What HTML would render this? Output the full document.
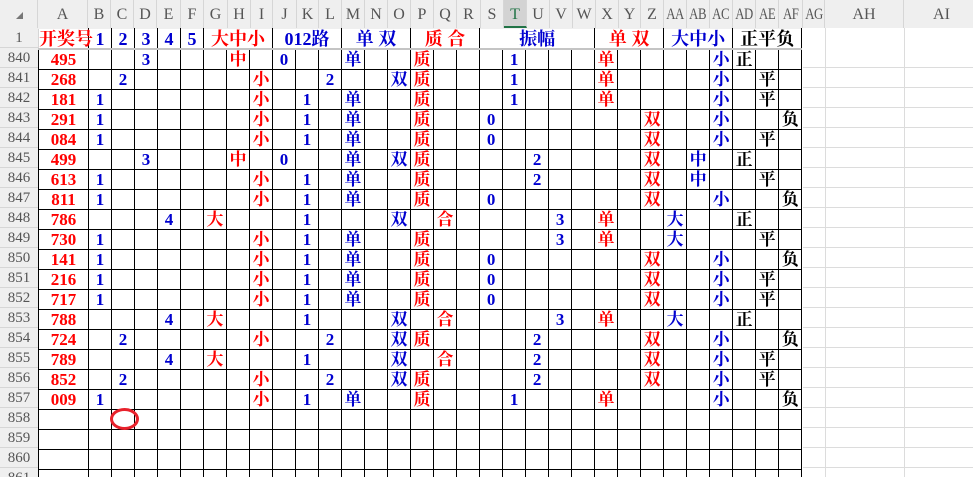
<!DOCTYPE html>
<html><head><meta charset="utf-8"><style>
html,body{margin:0;padding:0;width:973px;height:477px;overflow:hidden;background:#fff;position:relative;}
.hd{position:absolute;top:0;height:28px;background:#efefef;border-right:1px solid #d6d6d6;box-sizing:border-box;font:16px "Liberation Serif","Noto Serif CJK SC",serif;color:#555;text-align:center;line-height:30px;white-space:nowrap;}
.hd span.n{display:inline-block;transform:scaleX(0.8);letter-spacing:-0.5px;}
.rh{position:absolute;left:0;width:38px;height:20px;background:#efefef;border-bottom:1px solid #d6d6d6;box-sizing:border-box;font:15px "Liberation Serif",serif;color:#555;text-align:center;line-height:20px;}
table{position:absolute;left:38px;top:28px;border-collapse:collapse;table-layout:fixed;width:764px;}
td{border:1px solid #000;height:19px;padding:0;text-align:center;font:bold 17px "Liberation Serif","Noto Serif CJK SC",serif;line-height:18px;overflow:visible;white-space:nowrap;}
tr.h td{border-top:1px solid #efefef;border-bottom:2px solid #c4c4c4;font-size:18px;}
tr.h td.f{border-left:1px solid #d6d6d6;}
.r{color:#f00}.b{color:#0000d0}.k{color:#000}
.a{color:#f00}
#grid{position:absolute;left:803px;top:48px;width:170px;height:429px;
background-image:repeating-linear-gradient(to bottom,transparent 0,transparent 19px,#dcdcdc 19px,#dcdcdc 20px);}
.vl{position:absolute;top:28px;width:1px;height:449px;background:#dcdcdc;}
#ell{position:absolute;left:110px;top:408px;width:23px;height:16px;border:3px solid #e8212b;border-radius:50%;}
</style></head><body>
<div class="hd" style="left:0;width:38px;"><span style="position:absolute;left:16px;top:12px;width:0;height:0;border-left:7px solid transparent;border-bottom:7px solid #777;"></span></div>
<div class="hd" style="left:38px;width:50px">A</div>
<div class="hd" style="left:88px;width:23px">B</div>
<div class="hd" style="left:111px;width:23px">C</div>
<div class="hd" style="left:134px;width:23px">D</div>
<div class="hd" style="left:157px;width:24px">E</div>
<div class="hd" style="left:181px;width:23px">F</div>
<div class="hd" style="left:204px;width:24px">G</div>
<div class="hd" style="left:228px;width:23px">H</div>
<div class="hd" style="left:251px;width:22px">I</div>
<div class="hd" style="left:273px;width:24px">J</div>
<div class="hd" style="left:297px;width:22px">K</div>
<div class="hd" style="left:319px;width:23px">L</div>
<div class="hd" style="left:342px;width:23px">M</div>
<div class="hd" style="left:365px;width:23px">N</div>
<div class="hd" style="left:388px;width:23px">O</div>
<div class="hd" style="left:411px;width:23px">P</div>
<div class="hd" style="left:434px;width:23px">Q</div>
<div class="hd" style="left:457px;width:24px">R</div>
<div class="hd" style="left:481px;width:23px">S</div>
<div class="hd" style="left:504px;width:23px;background:#d3d3d3;color:#217346;border-bottom:2px solid #217346">T</div>
<div class="hd" style="left:527px;width:23px">U</div>
<div class="hd" style="left:550px;width:23px">V</div>
<div class="hd" style="left:573px;width:23px">W</div>
<div class="hd" style="left:596px;width:23px">X</div>
<div class="hd" style="left:619px;width:22px">Y</div>
<div class="hd" style="left:641px;width:23px">Z</div>
<div class="hd" style="left:664px;width:23px"><span class="n">AA</span></div>
<div class="hd" style="left:687px;width:23px"><span class="n">AB</span></div>
<div class="hd" style="left:710px;width:23px"><span class="n">AC</span></div>
<div class="hd" style="left:733px;width:23px"><span class="n">AD</span></div>
<div class="hd" style="left:756px;width:23px"><span class="n">AE</span></div>
<div class="hd" style="left:779px;width:24px"><span class="n">AF</span></div>
<div class="hd" style="left:803px;width:22px"><span class="n">AG</span></div>
<div class="hd" style="left:825px;width:79px">AH</div>
<div class="hd" style="left:904px;width:76px">AI</div>

<div class="rh" style="top:28px">1</div>
<div class="rh" style="top:48px">840</div>
<div class="rh" style="top:68px">841</div>
<div class="rh" style="top:88px">842</div>
<div class="rh" style="top:108px">843</div>
<div class="rh" style="top:128px">844</div>
<div class="rh" style="top:148px">845</div>
<div class="rh" style="top:168px">846</div>
<div class="rh" style="top:188px">847</div>
<div class="rh" style="top:208px">848</div>
<div class="rh" style="top:228px">849</div>
<div class="rh" style="top:248px">850</div>
<div class="rh" style="top:268px">851</div>
<div class="rh" style="top:288px">852</div>
<div class="rh" style="top:308px">853</div>
<div class="rh" style="top:328px">854</div>
<div class="rh" style="top:348px">855</div>
<div class="rh" style="top:368px">856</div>
<div class="rh" style="top:388px">857</div>
<div class="rh" style="top:408px">858</div>
<div class="rh" style="top:428px">859</div>
<div class="rh" style="top:448px">860</div>
<div class="rh" style="top:468px">861</div>

<div id="grid"></div>
<div class="vl" style="left:825px"></div>
<div class="vl" style="left:904px"></div>

<table>
<colgroup><col style="width:50px"><col span="31" style="width:23px"></colgroup>
<tr class="h"><td class="r f">开奖号<td class=b>1<td class=b>2<td class=b>3<td class=b>4<td class=b>5<td colspan=3 class=r>大中小<td colspan=3 class=b>012路<td colspan=3 class=b>单 双<td colspan=3 class=r>质 合<td colspan=5 class=b>振幅<td colspan=3 class=r>单 双<td colspan=3 class=b>大中小<td colspan=3 class=k>正平负</tr>
<tr><td class=a>495<td><td><td class=b>3<td><td><td><td class=r>中<td><td class=b>0<td><td><td class=b>单<td><td><td class=r>质<td><td><td><td class=b>1<td><td><td><td class=r>单<td><td><td><td><td class=b>小<td class=k>正<td><td></tr>
<tr><td class=a>268<td><td class=b>2<td><td><td><td><td><td class=r>小<td><td><td class=b>2<td><td><td class=b>双<td class=r>质<td><td><td><td class=b>1<td><td><td><td class=r>单<td><td><td><td><td class=b>小<td><td class=k>平<td></tr>
<tr><td class=a>181<td class=b>1<td><td><td><td><td><td><td class=r>小<td><td class=b>1<td><td class=b>单<td><td><td class=r>质<td><td><td><td class=b>1<td><td><td><td class=r>单<td><td><td><td><td class=b>小<td><td class=k>平<td></tr>
<tr><td class=a>291<td class=b>1<td><td><td><td><td><td><td class=r>小<td><td class=b>1<td><td class=b>单<td><td><td class=r>质<td><td><td class=b>0<td><td><td><td><td><td><td class=r>双<td><td><td class=b>小<td><td><td class=k>负</tr>
<tr><td class=a>084<td class=b>1<td><td><td><td><td><td><td class=r>小<td><td class=b>1<td><td class=b>单<td><td><td class=r>质<td><td><td class=b>0<td><td><td><td><td><td><td class=r>双<td><td><td class=b>小<td><td class=k>平<td></tr>
<tr><td class=a>499<td><td><td class=b>3<td><td><td><td class=r>中<td><td class=b>0<td><td><td class=b>单<td><td class=b>双<td class=r>质<td><td><td><td><td class=b>2<td><td><td><td><td class=r>双<td><td class=b>中<td><td class=k>正<td><td></tr>
<tr><td class=a>613<td class=b>1<td><td><td><td><td><td><td class=r>小<td><td class=b>1<td><td class=b>单<td><td><td class=r>质<td><td><td><td><td class=b>2<td><td><td><td><td class=r>双<td><td class=b>中<td><td><td class=k>平<td></tr>
<tr><td class=a>811<td class=b>1<td><td><td><td><td><td><td class=r>小<td><td class=b>1<td><td class=b>单<td><td><td class=r>质<td><td><td class=b>0<td><td><td><td><td><td><td class=r>双<td><td><td class=b>小<td><td><td class=k>负</tr>
<tr><td class=a>786<td><td><td><td class=b>4<td><td class=r>大<td><td><td><td class=b>1<td><td><td><td class=b>双<td><td class=r>合<td><td><td><td><td class=b>3<td><td class=r>单<td><td><td class=b>大<td><td><td class=k>正<td><td></tr>
<tr><td class=a>730<td class=b>1<td><td><td><td><td><td><td class=r>小<td><td class=b>1<td><td class=b>单<td><td><td class=r>质<td><td><td><td><td><td class=b>3<td><td class=r>单<td><td><td class=b>大<td><td><td><td class=k>平<td></tr>
<tr><td class=a>141<td class=b>1<td><td><td><td><td><td><td class=r>小<td><td class=b>1<td><td class=b>单<td><td><td class=r>质<td><td><td class=b>0<td><td><td><td><td><td><td class=r>双<td><td><td class=b>小<td><td><td class=k>负</tr>
<tr><td class=a>216<td class=b>1<td><td><td><td><td><td><td class=r>小<td><td class=b>1<td><td class=b>单<td><td><td class=r>质<td><td><td class=b>0<td><td><td><td><td><td><td class=r>双<td><td><td class=b>小<td><td class=k>平<td></tr>
<tr><td class=a>717<td class=b>1<td><td><td><td><td><td><td class=r>小<td><td class=b>1<td><td class=b>单<td><td><td class=r>质<td><td><td class=b>0<td><td><td><td><td><td><td class=r>双<td><td><td class=b>小<td><td class=k>平<td></tr>
<tr><td class=a>788<td><td><td><td class=b>4<td><td class=r>大<td><td><td><td class=b>1<td><td><td><td class=b>双<td><td class=r>合<td><td><td><td><td class=b>3<td><td class=r>单<td><td><td class=b>大<td><td><td class=k>正<td><td></tr>
<tr><td class=a>724<td><td class=b>2<td><td><td><td><td><td class=r>小<td><td><td class=b>2<td><td><td class=b>双<td class=r>质<td><td><td><td><td class=b>2<td><td><td><td><td class=r>双<td><td><td class=b>小<td><td><td class=k>负</tr>
<tr><td class=a>789<td><td><td><td class=b>4<td><td class=r>大<td><td><td><td class=b>1<td><td><td><td class=b>双<td><td class=r>合<td><td><td><td class=b>2<td><td><td><td><td class=r>双<td><td><td class=b>小<td><td class=k>平<td></tr>
<tr><td class=a>852<td><td class=b>2<td><td><td><td><td><td class=r>小<td><td><td class=b>2<td><td><td class=b>双<td class=r>质<td><td><td><td><td class=b>2<td><td><td><td><td class=r>双<td><td><td class=b>小<td><td class=k>平<td></tr>
<tr><td class=a>009<td class=b>1<td><td><td><td><td><td><td class=r>小<td><td class=b>1<td><td class=b>单<td><td><td class=r>质<td><td><td><td class=b>1<td><td><td><td class=r>单<td><td><td><td><td class=b>小<td><td><td class=k>负</tr>
<tr><td><td><td><td><td><td><td><td><td><td><td><td><td><td><td><td><td><td><td><td><td><td><td><td><td><td><td><td><td><td><td><td><td></tr>
<tr><td><td><td><td><td><td><td><td><td><td><td><td><td><td><td><td><td><td><td><td><td><td><td><td><td><td><td><td><td><td><td><td><td></tr>
<tr><td><td><td><td><td><td><td><td><td><td><td><td><td><td><td><td><td><td><td><td><td><td><td><td><td><td><td><td><td><td><td><td><td></tr>
<tr><td><td><td><td><td><td><td><td><td><td><td><td><td><td><td><td><td><td><td><td><td><td><td><td><td><td><td><td><td><td><td><td><td></tr>
</table>
<div id="ell"></div>
</body></html>
